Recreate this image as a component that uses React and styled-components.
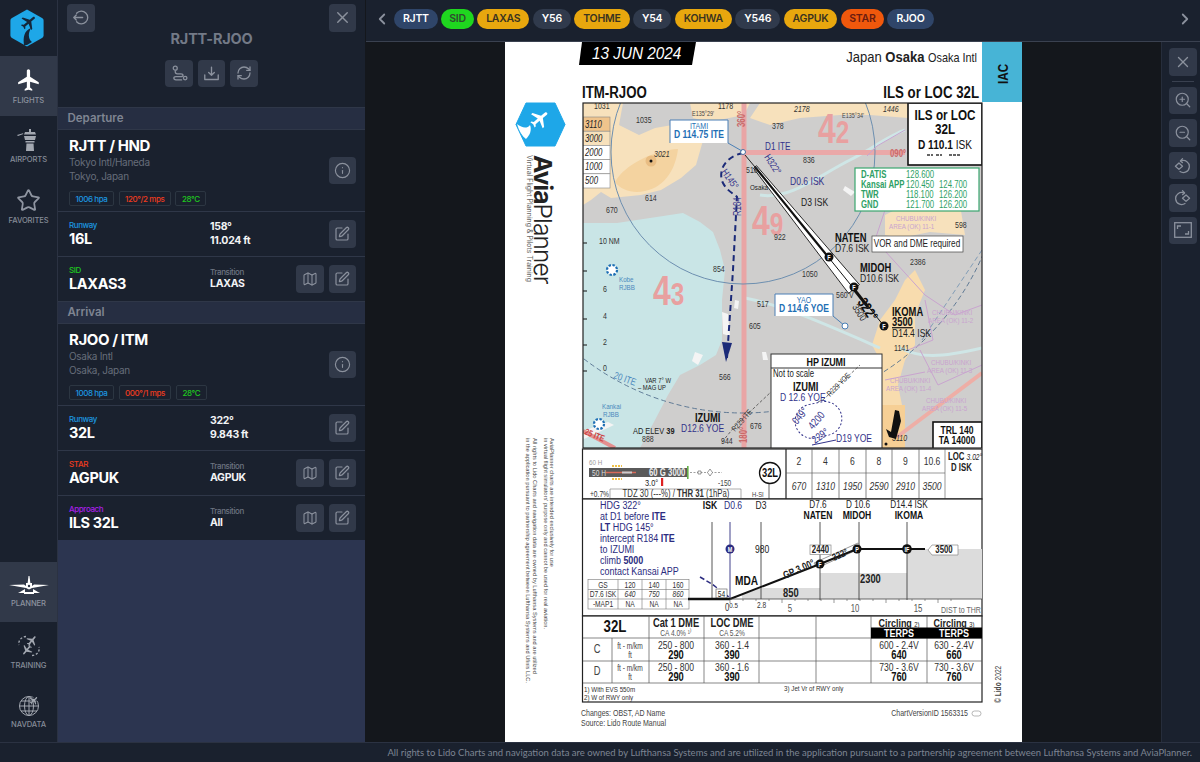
import React from "react";
import styled, { createGlobalStyle } from "styled-components";
import {
  X,
  Info,
  SquarePen,
  Map as MapIcon,
  RefreshCw,
  ChevronLeft,
  ChevronRight,
  ZoomIn,
  ZoomOut,
  Star,
} from "lucide-react";

const Global = createGlobalStyle`
  html, body, #root { margin: 0; height: 100%; }
  body {
    background: #14171c;
    font-family: Inter, "Open Sans", sans-serif;
    overflow: hidden;
  }
`;

const Page = styled.div`
  width: 1200px;
  height: 762px;
  display: flex;
  flex-direction: column;
`;

const Body = styled.div`
  flex: 1;
  display: flex;
  min-height: 0;
`;

const Footer = styled.div`
  height: 19px;
  border-top: 1px solid #2b3242;
  background: #1a212e;
  color: #7d8492;
  font-family: Lato, sans-serif;
  font-size: 9.5px;
  line-height: 20px;
  text-align: right;
  padding-right: 8px;
`;

const Rail = styled.nav`
  width: 58px;
  flex: none;
  background: #1a212e;
  display: flex;
  flex-direction: column;
  justify-content: space-between;
  border-right: 1px solid #2b3242;
  box-sizing: border-box;
`;

const LogoBox = styled.div`
  height: 56px;
  display: flex;
  align-items: center;
  justify-content: center;
  padding-right: 3px;
  box-sizing: border-box;
`;

const RailGroup = styled.div`
  display: flex;
  flex-direction: column;
`;

const RailItem = styled.a`
  height: 60px;
  display: flex;
  flex-direction: column;
  align-items: center;
  justify-content: center;
  gap: 3px;
  background: ${(p) => (p.$active ? "#313949" : "transparent")};
  color: ${(p) => (p.$active ? "#8d939f" : "#858b97")};
  font-size: 7.6px;
  font-weight: 500;
  letter-spacing: -0.1px;
`;

const Panel = styled.aside`
  width: 308px;
  flex: none;
  background: #2c3550;
  border-right: 1px solid #14171c;
  box-sizing: border-box;
`;

const Head = styled.div`
  height: 107px;
  background: #1a212e;
  padding: 4px 9px;
  box-sizing: border-box;
  position: relative;
`;

const HeadTop = styled.div`
  display: flex;
  justify-content: space-between;
`;

const Title = styled.div`
  color: #737a87;
  font-size: 14.5px;
  font-weight: 700;
  text-align: center;
  margin-top: -2px;
  letter-spacing: -0.2px;
`;

const HeadActions = styled.div`
  display: flex;
  justify-content: center;
  gap: 5px;
  margin-top: 13px;
`;

const Btn = styled.button`
  width: 27.5px;
  height: 27.5px;
  flex: none;
  padding: 0;
  border: 0;
  border-radius: 4px;
  background: #313949;
  color: #8b919d;
  display: flex;
  align-items: center;
  justify-content: center;
`;

const Band = styled.div`
  height: 21px;
  line-height: 21px;
  border-top: 1px solid #2f3748;
  background: #262e42;
  color: #7f8592;
  font-size: 11.5px;
  font-weight: 600;
  padding-left: 9.5px;
`;

const Row = styled.div`
  height: ${(p) => p.$h}px;
  box-sizing: border-box;
  background: #1a212e;
  border-top: 1px solid #2f3748;
  padding: 0 9px 0 11px;
  display: flex;
  align-items: center;
`;

const AirportInfo = styled.div`
  flex: 1;
  padding-top: 1px;
`;

const Code = styled.div`
  color: #fff;
  font-size: 15px;
  font-weight: 700;
  line-height: 20px;
  letter-spacing: -0.4px;
`;

const Place = styled.div`
  color: #666d7a;
  font-size: 10px;
  line-height: 13.7px;
  letter-spacing: -0.3px;
`;

const Badges = styled.div`
  display: flex;
  gap: 4.5px;
  margin-top: 8px;
`;

const Badge = styled.span`
  height: 15px;
  padding: 0 5.5px;
  line-height: 14px;
  box-sizing: border-box;
  border: 1px solid #2c3642;
  border-radius: 2px;
  font-size: 8px;
  font-weight: 500;
  letter-spacing: -0.4px;
  color: ${(p) => p.$c};
`;

const Col = styled.div`
  width: ${(p) => p.$w || "141px"};
  flex: none;
`;

const Small = styled.div`
  font-size: 8px;
  line-height: 10px;
  font-weight: 500;
  letter-spacing: -0.4px;
  color: ${(p) => p.$c || "#6d7481"};
`;

const Big = styled.div`
  color: #fff;
  font-size: 14.5px;
  font-weight: 700;
  line-height: 18px;
  letter-spacing: -0.35px;
`;

const Mid = styled.div`
  color: #f2f3f5;
  font-size: 10.5px;
  font-weight: 700;
  line-height: 14px;
  letter-spacing: -0.3px;
`;

const Actions = styled.div`
  margin-left: auto;
  display: flex;
  gap: 5px;
`;

const Main = styled.main`
  flex: 1;
  min-width: 0;
  display: flex;
  flex-direction: column;
`;

const TopBar = styled.div`
  height: 42px;
  flex: none;
  box-sizing: border-box;
  background: #1a212e;
  border-bottom: 1px solid #3a4150;
  display: flex;
  align-items: center;
  padding: 0 6px 4px 7px;
  color: #8b919d;
`;

const Chips = styled.div`
  display: flex;
  gap: 3.4px;
  margin-left: 3px;
  flex: 1;
`;

const Chip = styled.span`
  height: 20px;
  line-height: 20px;
  border-radius: 10px;
  padding: 0 ${(p) => p.$pad || 8.5}px;
  font-size: 10.5px;
  font-weight: 600;
  letter-spacing: -0.25px;
  text-align: center;
  background: ${(p) => p.$bg};
  color: ${(p) => p.$fg};
`;

const Content = styled.div`
  flex: 1;
  display: flex;
  min-height: 0;
`;

const Viewer = styled.div`
  flex: 1;
  display: flex;
  justify-content: center;
  background: #14171c;
  overflow: hidden;
`;

const Tools = styled.div`
  width: 39px;
  flex: none;
  box-sizing: border-box;
  background: #1a212e;
  border-left: 1px solid #262d3b;
  padding: 6px 0 0 7px;
  display: flex;
  flex-direction: column;
  gap: 5px;
`;

const ToolSep = styled.div`
  width: 22px;
  height: 1px;
  margin: 0 0 0 3px;
  background: #3a4150;
`;

const ChartSvg = styled.svg`
  display: block;
  width: 517px;
  height: 700px;
  flex: none;
  background: #fff;
  font-family: "Liberation Sans", sans-serif;
`;

// svg text in page coordinates, squeezed sideways like the chart's narrow face
const T = ({ x, y, s = 8, w, a, c = "#222", r, i, cx = 0.78, children }) => (
  <text
    fontSize={s}
    fontWeight={w ? 700 : 400}
    fontStyle={i ? "italic" : "normal"}
    textAnchor={a || "start"}
    fill={c}
    transform={`${r !== undefined ? `rotate(${r} ${x} ${y}) ` : ""}translate(${x} ${y}) scale(${cx} 1)`}
  >
    {children}
  </text>
);

const PLANE =
  "M21 16v-2l-8-5V3.500c0-.83-.67-1.500-1.500-1.500S10 2.670 10 3.500V9l-8 5v2l8-2.500V19l-2 1.500V22l3.500-1 3.500 1v-1.500L13 19v-5.500l8 2.500z";

const RailLogo = () => (
  <svg width="36" height="40" viewBox="0 0 36 40">
    <path
      d="M18 1.500 33 10c1 .6 1.600 1.500 1.600 2.700v14.600c0 1.200-.6 2.100-1.600 2.700L18 38.500 3 30c-1-.6-1.600-1.500-1.600-2.700V12.700C1.400 11.500 2 10.600 3 10z"
      fill="#1ea7e8"
    />
    <path d="M15 37c-1-8 0-14 7-17-3 5-3 11 1 14l-5 3z" fill="#14263a" />
    <g transform="translate(11 5) rotate(50 9 9) scale(.78)">
      <path d={PLANE} fill="#14263a" />
    </g>
  </svg>
);

const TowerIcon = () => (
  <svg width="26" height="24" viewBox="0 0 26 24" fill="#a3a8b1">
    <path d="M1 7l6-1.700.4.800L2 8z" />
    <rect x="13" y="1" width="2" height="3" />
    <path d="M9 4h10l1 2.500H8z" />
    <path d="M8 8h12l-1 4H9z" />
    <rect x="9.500" y="13" width="9" height="1.500" />
    <path d="M10.500 15.500h7l.5 7.500h-8z" />
  </svg>
);

const PlannerIcon = () => (
  <svg width="40" height="20" viewBox="0 0 40 20" fill="#fff">
    <path d="M19.500 0h1l1 8h-3z" />
    <path d="M0 9l15-.5 2 1.500v2zM40 9l-15-.5-2 1.500v2z" />
    <path d="M17 7h6v5l-3 1.500L17 12z" />
    <path d="M11 16l5-3v4H9zM29 16l-5-3v4h7z" />
    <path d="M15 16h10v2H15z" />
    <circle cx="20" cy="10" r="1.200" fill="#313949" />
  </svg>
);

const TrainingIcon = () => (
  <svg width="24" height="24" viewBox="0 0 24 24">
    <g transform="translate(9 0) rotate(40 6 6) scale(.55)">
      <path d={PLANE} fill="#a3a8b1" />
    </g>
    <g transform="translate(2 10) rotate(220 7 6) scale(.55)">
      <path d={PLANE} fill="#a3a8b1" />
    </g>
    <path
      d="M9 2.500C4 3 1 7 2 11M15 21.500c5-.5 8-4 7-8.500"
      fill="none"
      stroke="#a3a8b1"
      strokeWidth="1.300"
      strokeDasharray="2.200 1.800"
    />
  </svg>
);

const NavdataIcon = () => (
  <svg width="22" height="22" viewBox="0 0 22 22" fill="none" stroke="#a3a8b1" strokeWidth="1">
    <circle cx="11" cy="11" r="9.500" />
    <ellipse cx="11" cy="11" rx="4.500" ry="9.500" />
    <path d="M11 1.500v19M1.500 11h19M3 6h16M3 16h16" />
    <path d="M13 3l6 4-1-5z" fill="#1a212e" stroke="none" />
    <g transform="translate(11 0) rotate(45 5 5) scale(.45)">
      <path d={PLANE} fill="#a3a8b1" stroke="none" />
    </g>
  </svg>
);

const LeaveIcon = () => (
  <svg width="17" height="17" viewBox="0 0 24 24" fill="none" stroke="currentColor" strokeWidth="1.900" strokeLinecap="round" strokeLinejoin="round">
    <path d="M6.500 6a9 9 0 1 1 0 12" />
    <path d="M15 12H2.500M6 8.500 2.500 12 6 15.500" />
  </svg>
);

const RoutePinIcon = () => (
  <svg width="17" height="17" viewBox="0 0 24 24" fill="none" stroke="currentColor" strokeWidth="1.800" strokeLinecap="round">
    <circle cx="6" cy="4.500" r="2.800" />
    <path d="M6 8v1.500c0 2 1 3 3 3h5c2 0 3 1 3 2s-1 2-3 2H7c-2 0-3 1-3 2s1 2.500 3 2.500h8" />
    <circle cx="20" cy="18.500" r="2.500" />
  </svg>
);

const TrayIcon = () => (
  <svg width="17" height="17" viewBox="0 0 24 24" fill="none" stroke="currentColor" strokeWidth="1.900" strokeLinecap="round" strokeLinejoin="round">
    <path d="M12 3v11M8 10.500l4 4 4-4M2.500 14v6.500h19V14" />
  </svg>
);

const RotateIcon = ({ flip }) => (
  <svg width="17" height="17" viewBox="0 0 24 24" fill="none" stroke="currentColor" strokeWidth="1.800" strokeLinecap="round" strokeLinejoin="round">
    <g transform={flip ? "matrix(-1 0 0 1 24 0)" : undefined}>
      <path d="M12 2.500 9 5.500l3 2.500" />
      <path d="M10 5.500a8.500 8.500 0 1 1-1.500 15" />
      <path d="M7 8.500 2 13l5 4.500 5-4.500z" />
    </g>
  </svg>
);

const FitIcon = () => (
  <svg width="18" height="16" viewBox="0 0 18 16" fill="none" stroke="currentColor" strokeWidth="1.300">
    <rect x=".7" y=".7" width="16.600" height="14.600" />
    <path d="M3.500 7V4H7M14.500 9v3H11" />
  </svg>
);

const Compass = ({ x, y }) => (
  <circle cx={x} cy={y} r="5" fill="#fff" stroke="#1f6fb5" strokeWidth="2.200" strokeDasharray="2.400 1.500" />
);

const FixMark = ({ x, y, t = "F" }) => (
  <g>
    <circle cx={x} cy={y} r={t === "IF" ? 4.800 : 4.500} fill="#111" />
    <T x={x} y={y + 2.500} s={7} w a="middle" c="#fff">{t}</T>
  </g>
);

const MinRow = ({ y, name, a, b, c, d, e, f, g, h }) => (
  <g>
    <T x={597} y={y + 14} s={12} a="middle" c="#444">{name}</T>
    <T x={630} y={y + 10} s={8.500} a="middle" c="#444">ft - m/km</T>
    <T x={630} y={y + 19} s={8.500} a="middle" c="#444">ft</T>
    <T x={676} y={y + 10} s={11} a="middle" c="#333">{a}</T>
    <T x={676} y={y + 20} s={12} w a="middle" c="#111">{b}</T>
    <T x={732} y={y + 10} s={11} a="middle" c="#333">{c}</T>
    <T x={732} y={y + 20} s={12} w a="middle" c="#111">{d}</T>
    <T x={899} y={y + 10} s={11} a="middle" c="#333">{e}</T>
    <T x={899} y={y + 20} s={12} w a="middle" c="#111">{f}</T>
    <T x={954} y={y + 10} s={11} a="middle" c="#333">{g}</T>
    <T x={954} y={y + 20} s={12} w a="middle" c="#111">{h}</T>
  </g>
);

const spots = [
  [594, 109, "1031"], [718, 109, "1178"], [636, 123, "1035"], [654, 157, "3021"],
  [645, 201, "614"], [606, 213, "670"], [599, 244, "10 NM"], [772, 129, "378"],
  [794, 112, "2178"], [883, 112, "1446"], [803, 163, "836"], [774, 240, "922"],
  [802, 277, "1050"], [910, 265, "2386"], [955, 228, "598"], [713, 272, "854"],
  [746, 173, "518"], [836, 298, "560'V"], [757, 307, "517"], [749, 329, "605"],
  [719, 380, "566"], [894, 351, "1141"], [642, 442, "888"], [892, 441, "3110"],
  [721, 444, "944"], [750, 429, "676"],
];

const grads = [
  [2, 670], [4, 1310], [6, 1950], [8, 2590], [9, 2910], [10.6, 3500],
];
const gradX = [786, 812, 839, 866, 892, 919, 945];

const legend = ["3110", "3000", "2000", "1000", "500"];

const Chart = () => (
  <ChartSvg viewBox="505 42 517 700">
    {/* brand strip */}
    <path d="M526 103h29l10 21.500-10 21.500h-29l-10-21.500z" fill="#1ea7e8" stroke="#1ea7e8" strokeWidth="1" strokeLinejoin="round" />
    <path d="M517 124c5 4 10 5 13 1 2 5 0 10-4 14-4-3-7-8-9-15z" fill="#fff" />
    <g transform="translate(528 108) rotate(50 12 12) scale(.95)"><path d={PLANE} fill="#fff" /></g>
    <text x="534" y="155" fontSize="24.500" fill="#222" letterSpacing="-.9" fontFamily="Inter, sans-serif" transform="rotate(90 534 155)"><tspan fontWeight="700">Avia</tspan><tspan fontWeight="300">Planner</tspan></text>
    <text x="527" y="155" fontSize="7" fill="#666" transform="rotate(90 527 155)" fontFamily="Inter, sans-serif">Virtual Flight Planning &amp; Pilots Training</text>
    <g fontSize="5.700" fill="#444">
      <text x="550" y="438" transform="rotate(90 550 438)">AviaPlanner charts are intended exclusively for use</text>
      <text x="544" y="438" transform="rotate(90 544 438)">in virtual flight simulators' purpose only and cannot be used for real aviation.</text>
      <text x="533" y="438" transform="rotate(90 533 438)">All rights to Lido Charts and navigation data are owned by Lufthansa Systems and are utilized</text>
      <text x="526" y="438" transform="rotate(90 526 438)">in the application pursuant to partnership agreement between Lufthansa Systems and Ufinis LLC.</text>
    </g>

    {/* chart header */}
    <path d="M582 42h114l-4 23H579z" fill="#000" />
    <T x={592} y={59} s={17} i c="#fff" cx={0.9}>13 JUN 2024</T>
    <T x={977} y={62} s={15} a="end" cx={0.87}>Japan <tspan fontWeight="700">Osaka</tspan> <tspan fontSize="12.500">Osaka Intl</tspan></T>
    <T x={582} y={98} s={17} w c="#111">ITM-RJOO</T>
    <T x={979} y={98} s={17} w a="end" c="#111">ILS or LOC 32L</T>
    <rect x="982" y="42" width="41" height="60" fill="#47b4d6" />
    <T x={1008} y={84} s={15} w r={-90} c="#111">IAC</T>

    {/* map */}
    <clipPath id="mapClip"><rect x="583" y="103" width="399" height="345" /></clipPath>
    <g clipPath="url(#mapClip)">
      <rect x="583" y="103" width="399" height="345" fill="#cfcecd" />
      <path d="M583 103h40l-4 22 20 10 16-7 35-6 14 15-8 28-15 13-20 12-20 5-30 3-10-6-10 8-8 5z" fill="#f7e1bc" />
      <path d="M690 103h60l-6 12-35 7-16-4z" fill="#f7e1bc" />
      <path d="M615 182c10-18 40-32 63-33-2 18-12 38-33 42-12 3-24-1-30-9z" fill="#f4d3a0" />
      <circle cx="651" cy="161" r="5.500" fill="#e9bd83" />
      <circle cx="651" cy="161" r="1.500" fill="#111" />
      <path d="M583 223l34 0 33-5 33-5 17 9 13 10 7 18 5 20-3 30v40l-6 15-16 10-20 10-12 20-13 25-15 28h-57z" fill="#c9e5e6" />
      <path d="M760 103h148v15l-38-3-30 0-40 3-30 7-20-7z" fill="#f7e1bc" />
      <path d="M885 215l20-10h55l5 30-35-3-30 6-15-3z" fill="#f7e1bc" />
      <path d="M915 270l10 20-10 25v30l-10 15-7 25 7 35v28h-23v-48l-2-40-8-15 8-25 15-20 10-20z" fill="#f8dcae" />
      <path d="M880 405h25v43h-25z" fill="#f6cf95" />
      <g fill="none" stroke="#cfe6e6" strokeWidth="3">
        <path d="M745 298c40 8 80 26 135 50" />
        <path d="M760 195c30 5 60-20 90-35 20-10 40-25 55-30" />
        <path d="M900 348c20 10 40 10 82 0" />
      </g>
      <g fill="#f4f4f4">
        <path d="M722 312l6 2 2 22-7-2zM695 352l8 3-5 10-6-4zM580 432l28-10 6 3-30 14zM762 352l4 0 2 8-5 0zM735 300l4 1-1 8-4-1zM845 186l10 6-4 4-8-6z" />
      </g>
      {/* red numbers and bands */}
      <rect x="741.500" y="103" width="5" height="345" fill="#e9a5a5" />
      <rect x="745" y="150" width="160" height="5" fill="#eaa8a8" />
      <path d="M897 437l85-64" stroke="#eeaea6" strokeWidth="4" />
      <path d="M583 431l32 17" stroke="#e48f8f" strokeWidth="4" />
      <T x={818} y={143} s={42} w c="#e8a0a0" cx={0.76}>4<tspan fontSize="32">2</tspan></T>
      <T x={752} y={235} s={42} w c="#e8a0a0" cx={0.76}>4<tspan fontSize="32">9</tspan></T>
      <T x={653} y={305} s={42} w c="#e8a0a0" cx={0.76}>4<tspan fontSize="32">3</tspan></T>
      {/* range rings and airspace */}
      <circle cx="743" cy="152" r="132" fill="none" stroke="#6d8fb0" strokeWidth="1" />
      <circle cx="743" cy="152" r="261" fill="none" stroke="#54718e" strokeWidth=".9" strokeDasharray="5 3" />
      <g fill="none" stroke="#c9a4cf" strokeWidth="1">
        <path d="M905 130l-28 16-10 10M885 210l-10 30 50 55 30 20 27-10" />
        <path d="M925 300l8 40-25 10M920 350l18 35 44-20M885 380l40-8" />
      </g>
      <path d="M982 250l-60 90" stroke="#6d8fb0" strokeWidth=".8" strokeDasharray="5 3" fill="none" />
      {/* lateral path */}
      <path d="M743 153c-20 4-25 20-20 30 4 8 10 10 14 14l-4 73-6 88" fill="none" stroke="#1b2a78" strokeWidth="2" strokeDasharray="6 4" />
      <path d="M722 342l10 1-6 19z" fill="#1b2a78" />
      <path d="M756.500 165.700 753.500 168.300 848.600 293.400 859.400 284.600z" fill="#fff" stroke="#111" strokeWidth=".9" />
      <path d="M745 155l10 12" stroke="#222" strokeWidth="1" />
      <path d="M755 167l74 91" stroke="#111" strokeWidth="2.200" />
      <path d="M829 258l55 68" stroke="#111" strokeWidth="1" />
      <path d="M853 288l15 19" stroke="#111" strokeWidth="3" />
      <circle cx="743" cy="152" r="2.500" fill="#fff" stroke="#4a6fa0" />
      <FixMark x={829} y={257} />
      <FixMark x={854} y={287} />
      <FixMark x={884} y={326} />
      <Compass x={612} y={270} />
      <Compass x={599} y={424} />
      {/* text */}
      <g>
        {spots.map(([x, y, t]) => (
          <T key={t + x} x={x} y={y} s={9} i={t === "3021" || t === "2178" || t === "1446" || t === "3110"} c="#333">{t}</T>
        ))}
      </g>
      <T x={692} y={116} s={7} c="#444">E135°29'</T>
      <T x={842} y={118} s={7} c="#444">E135°34'</T>
      <T x={745} y={127} s={10} w r={-90} c="#c96a6a">360°</T>
      <T x={890} y={157} s={10} w c="#c96a6a">090°</T>
      <T x={747} y={443} s={10} w r={-90} c="#c96a6a">180°</T>
      <T x={750} y={190} s={8} c="#222">Osaka</T>
      <T x={765} y={150} s={10.500} c="#33338a">D1 ITE</T>
      <T x={764} y={157} s={10} r={57} c="#33338a">H322°</T>
      <T x={721} y={172} s={10} r={55} c="#33338a">H145°</T>
      <T x={741} y={216} s={10} r={-90} c="#33338a">R184</T>
      <T x={790} y={185} s={11} c="#33338a">D0.6 ISK</T>
      <T x={801} y={206} s={11} c="#222">D3 ISK</T>
      <T x={835} y={242} s={12} w c="#111">NATEN</T>
      <T x={835} y={252} s={11} c="#222">D7.6 ISK</T>
      <T x={860} y={272} s={12} w c="#111">MIDOH</T>
      <T x={860} y={282} s={11} c="#222">D10.6 ISK</T>
      <T x={857} y={302} s={15} w r={57} c="#111">322°</T>
      <T x={852} y={307} s={10} r={58} c="#222">3500</T>
      <T x={892} y={316} s={12} w c="#111">IKOMA</T>
      <T x={892} y={326} s={12} w c="#111"><tspan textDecoration="underline">3500</tspan></T>
      <T x={892} y={337} s={11} c="#222">D14.4 ISK</T>
      <T x={896} y={221} s={8} c="#c9a4cf">CHUBU/KINKI</T><T x={889} y={229} s={8} c="#c9a4cf">AREA (OK) 11-1</T>
      <T x={932} y={315} s={8} c="#c9a4cf">CHUBU/KINKI</T><T x={928} y={323} s={8} c="#c9a4cf">AREA (OK) 11-2</T>
      <T x={931} y={365} s={8} c="#c9a4cf">CHUBU/KINKI</T><T x={927} y={373} s={8} c="#c9a4cf">AREA (OK) 11-3</T>
      <T x={890} y={383} s={8} c="#c9a4cf">CHUBU/KINKI</T><T x={886} y={391} s={8} c="#c9a4cf">AREA (OK) 11-4</T>
      <T x={926} y={403} s={8} c="#c9a4cf">CHUBU/KINKI</T><T x={922} y={411} s={8} c="#c9a4cf">AREA (OK) 11-5</T>
      <T x={619} y={282} s={8} c="#4c89bd">Kobe</T><T x={619} y={290} s={8} c="#4c89bd">RJBB</T>
      <T x={602} y={409} s={8} c="#4c89bd">Kankai</T><T x={603} y={417} s={8} c="#4c89bd">RJBB</T>
      {[[292, "6"], [319, "4"], [345, "2"], [371, "0"]].map(([y, t]) => (
        <T key={t} x={603} y={y} s={9} c="#333">{t}</T>
      ))}
      <path d="M583 291h4M583 319h4M583 345h4M583 371h4M583 243h4M583 271h4" stroke="#111" />
      <T x={613} y={378} s={10} r={20} c="#4c89bd">20 ITE</T>
      <T x={645} y={383} s={7.500} c="#222">VAR 7° W</T>
      <T x={638} y={390} s={7.500} c="#222">– MAG UP</T>
      <T x={633} y={434} s={9.500} c="#222">AD ELEV <tspan fontWeight="700">39</tspan></T>
      <T x={584} y={434} s={9} w r={22} c="#c44">25 ITE</T>
      <T x={695} y={422} s={12} w c="#111">IZUMI</T>
      <T x={681} y={432} s={11} c="#33338a">D12.6 YOE</T>
      <T x={735} y={432} s={8} r={-48} c="#333">R229 ITE</T>
      <path d="M722 442l14-17 36-34" stroke="#333" strokeWidth=".7" strokeDasharray="3 2" fill="none" />
      {/* boxes on the map */}
      <g>
        {legend.map((t, k) => (
          <g key={t}>
            <rect x="583" y={117 + k * 14.200} width="27" height="14.200" fill={k === 0 ? "#f0c48c" : k === 1 ? "#f7e1bc" : "#fff"} stroke="#888" strokeWidth=".6" />
            <T x={585} y={127.500 + k * 14.200} s={10} i c="#222">{t}</T>
          </g>
        ))}
      </g>
      <path d="M670 143v-23h58v23" fill="#fff" stroke="#4a7fb5" />
      <T x={699} y={129} s={9} a="middle" c="#1f6fb5">ITAMI</T>
      <T x={699} y={138} s={11} w a="middle" c="#1f6fb5">D 114.75 ITE</T>
      <path d="M728 143l14 8" stroke="#4a7fb5" fill="none" />
      <path d="M775 316v-22h58v22" fill="#fff" stroke="#4a7fb5" />
      <T x={804} y={303} s={9} a="middle" c="#1f6fb5">YAO</T>
      <T x={804} y={312} s={11} w a="middle" c="#1f6fb5">D 114.6 YOE</T>
      <path d="M833 316l12 10" stroke="#4a7fb5" fill="none" />
      <circle cx="845" cy="326" r="3" fill="#fff" stroke="#4a7fb5" />
      <rect x="908" y="103" width="74" height="62" fill="#fff" stroke="#111" strokeWidth="1.600" />
      <T x={945} y={120} s={15} w a="middle" c="#111">ILS or LOC</T>
      <T x={945} y={134} s={15} w a="middle" c="#111">32L</T>
      <T x={945} y={149} s={13} a="middle" c="#111"><tspan fontWeight="700">D 110.1</tspan> ISK</T>
      <path d="M927 155h6M936 155h6M949 155h12" stroke="#333" strokeWidth="1.500" strokeDasharray="3 1" />
      <rect x="855" y="168" width="124" height="43" fill="#fff" stroke="#3aa66f" strokeWidth="1.200" />
      {[
        [178, "D-ATIS", "128.600", ""],
        [188, "Kansai APP", "120.450", "124.700"],
        [198, "TWR", "118.100", "126.200"],
        [208, "GND", "121.700", "126.200"],
      ].map(([y, n, f1, f2]) => (
        <g key={n}>
          <T x={861} y={y} s={10} w c="#2f9f66">{n}</T>
          <T x={906} y={y} s={10} c="#2f9f66">{f1}</T>
          <T x={939} y={y} s={10} c="#2f9f66">{f2}</T>
        </g>
      ))}
      <rect x="872" y="236" width="91" height="16" fill="#fff" stroke="#444" strokeWidth=".7" />
      <T x={917} y={247} s={10.500} a="middle" c="#222">VOR and DME required</T>
      {/* hp inset */}
      <rect x="771" y="354" width="111" height="95" fill="#fff" stroke="#333" />
      <path d="M771 368h111" stroke="#333" />
      <T x={826} y={366} s={11.500} w a="middle" c="#111">HP IZUMI</T>
      <T x={773} y={377} s={10} c="#222">Not to scale</T>
      <T x={793} y={391} s={12} w c="#111">IZUMI</T>
      <T x={780} y={401} s={11} c="#33338a">D 12.6 YOE</T>
      <path d="M818 402l6-3 36-34" stroke="#333" strokeWidth=".7" strokeDasharray="3 2" fill="none" />
      <T x={830} y={397} s={8} r={-45} c="#333">R229 YOE</T>
      <rect x="795" y="403" width="47" height="34" rx="17" fill="none" stroke="#33338a" strokeDasharray="2 2" transform="rotate(-12 818 420)" />
      <T x={797} y={425} s={11} r={-50} c="#33338a">049°</T>
      <T x={813} y={430} s={11} r={-50} c="#33338a">4200</T>
      <T x={815} y={444} s={11} r={-35} c="#33338a">229°</T>
      <T x={836} y={442} s={11} c="#33338a">D19 YOE</T>
      <path d="M812 445l24-5" stroke="#33338a" />
      <path d="M895 410l-4 22-5-3 3 8 7 2 5-18-2-10z" fill="#111" />
      <circle cx="886" cy="444" r="1.500" fill="#111" />
      <rect x="933" y="422" width="49" height="27" fill="#fff" stroke="#111" strokeWidth="1.600" />
      <T x={957} y={434} s={11} w a="middle" c="#111">TRL 140</T>
      <T x={957} y={444} s={11} w a="middle" c="#111">TA 14000</T>
    </g>
    <rect x="583" y="103" width="399" height="345" fill="none" stroke="#222" strokeWidth="1.200" />

    {/* approach strip */}
    <rect x="582.500" y="449" width="399.500" height="50" fill="#fff" stroke="#222" strokeWidth="1.200" />
    <path d="M786 449v50" stroke="#222" strokeWidth="1.200" />
    <T x={589} y={465} s={8} c="#999">60 H</T>
    <rect x="589" y="468" width="98" height="9" fill="#5a5a5a" />
    <T x={592} y={475.500} s={8.500} c="#ddd">50 H</T>
    <path d="M606 472.500h30" stroke="#d86a5a" strokeWidth="1.500" />
    <path d="M622 472.500h10" stroke="#ccc" strokeWidth="2" />
    <path d="M612 466h10M612 479h10" stroke="#f0c24a" strokeWidth="2" strokeDasharray="2 1" />
    <T x={649} y={476} s={10} w c="#eee">60 G 3000</T>
    <rect x="687" y="466" width="1.600" height="13" fill="#65b04a" />
    <path d="M690 472.500h32" stroke="#777" strokeWidth=".7" strokeDasharray="2 1.500" />
    <path d="M710 469l2.500 3.500-2.500 3.500-2.500-3.500zM698 471h3v3h-3z" fill="#fff" stroke="#555" strokeWidth=".6" />
    <T x={645} y={486} s={9.500} c="#222">3.0°</T>
    <rect x="661" y="478" width="2.200" height="8" fill="#d22" />
    <T x={718} y={486} s={8.500} c="#444">-150</T>
    <T x={590} y={497} s={8.500} c="#333">+0.7%</T>
    <path d="M610 499v-10h131v10" fill="none" stroke="#777" strokeWidth=".6" />
    <T x={676} y={497} s={10} a="middle" c="#333">TDZ 30 (---%) / <tspan fontWeight="700">THR 31</tspan> (1hPa)</T>
    <T x={752} y={497} s={7.500} c="#444">H-SI</T>
    <path d="M769 484v15" stroke="#222" strokeWidth=".7" />
    <circle cx="770" cy="473" r="10.500" fill="#fff" stroke="#111" strokeWidth="1.300" />
    <T x={770} y={477} s={12} w a="middle" c="#111">32L</T>
    <path d="M786 473h159M945 449v50" stroke="#555" strokeWidth=".6" />
    {gradX.slice(1, 6).map((x) => (
      <path key={x} d={`M${x} 449v50`} stroke="#555" strokeWidth=".7" />
    ))}
    {grads.map(([d, f], k) => (
      <g key={d}>
        <T x={(gradX[k] + gradX[k + 1]) / 2} y={465} s={11} a="middle" c="#333">{d}</T>
        <T x={(gradX[k] + gradX[k + 1]) / 2} y={490} s={11} i a="middle" c="#333">{f}</T>
      </g>
    ))}
    <T x={948} y={460} s={10} w c="#222">LOC <tspan fontWeight="400" fontStyle="italic" fontSize="8.500">3.02°</tspan></T>
    <T x={951} y={471} s={10} w c="#222">D ISK</T>

    {/* profile */}
    <rect x="582.500" y="499" width="399.500" height="117" fill="#fff" stroke="#222" strokeWidth="1.200" />
    {[
      [509, "HDG 322°"],
      [519.500, <>at D1 before <tspan fontWeight="700">ITE</tspan></>],
      [530.500, <><tspan fontWeight="700">LT</tspan> HDG 145°</>],
      [541.500, <>intercept R184 <tspan fontWeight="700">ITE</tspan></>],
      [552.500, "to IZUMI"],
      [563.500, <>climb <tspan fontWeight="700">5000</tspan></>],
      [575, "contact Kansai APP"],
    ].map(([y, t]) => (
      <T key={y} x={600} y={y} s={11.500} c="#2c2c80">{t}</T>
    ))}
    <g stroke="#777" strokeWidth=".6" fill="none">
      <rect x="588" y="579.500" width="101" height="29.500" />
      <path d="M588 589.500h101M588 599h101M618 579.500v29.500M642 579.500v29.500M666 579.500v29.500" />
    </g>
    {[
      [587.500, "GS", "120", "140", "160", false],
      [597, "D7.6 ISK", "640", "750", "860", true],
      [607, "-MAP1", "NA", "NA", "NA", false],
    ].map(([y, n, p, q, o, it]) => (
      <g key={n}>
        <T x={603} y={y} s={8.500} a="middle" c="#333">{n}</T>
        <T x={630} y={y} s={8.500} i={it} a="middle" c="#333">{p}</T>
        <T x={654} y={y} s={8.500} i={it} a="middle" c="#333">{q}</T>
        <T x={678} y={y} s={8.500} i={it} a="middle" c="#333">{o}</T>
      </g>
    ))}
    <path d="M742 599V595L760 588H820V573H907V549H982V599z" fill="#dcdcdc" />
    <path d="M712 522v78M761 522v77M820 522v78M859 522v78M907 522v78" stroke="#444" strokeWidth=".9" />
    <path d="M730 522v78" stroke="#2c2c80" strokeWidth=".9" />
    <T x={710} y={509} s={11} w a="middle" c="#111">ISK</T>
    <T x={733} y={509} s={11} a="middle" c="#2c2c80">D0.6</T>
    <T x={761} y={509} s={11} a="middle" c="#222">D3</T>
    <T x={818} y={508} s={10.500} a="middle" c="#222">D7.6</T>
    <T x={818} y={519} s={11} w a="middle" c="#111">NATEN</T>
    <T x={858} y={508} s={10.500} a="middle" c="#222">D 10.6</T>
    <T x={857} y={519} s={11} w a="middle" c="#111">MIDOH</T>
    <T x={909} y={508} s={10.500} a="middle" c="#222">D14.4 ISK</T>
    <T x={909} y={519} s={11} w a="middle" c="#111">IKOMA</T>
    <circle cx="730" cy="549" r="4.500" fill="#2c2c80" />
    <T x={730} y={552} s={7} w a="middle" c="#fff">M</T>
    <T x={755} y={553} s={11} c="#222">980</T>
    <path d="M700 577l12 7 18 14" stroke="#2c2c80" strokeWidth="1.500" strokeDasharray="5 2.500" fill="none" />
    <rect x="716" y="589" width="11" height="9" fill="#fff" stroke="#555" strokeWidth=".6" />
    <T x={721.500} y={597} s={8.500} a="middle" c="#222">54</T>
    <T x={735} y={585} s={13} w c="#111">MDA</T>
    <path d="M688 599h42" stroke="#111" strokeWidth="2.400" />
    <path d="M814 563l44-20 3 5-44 20z" fill="#fff" stroke="#555" strokeWidth=".6" />
    <path d="M730 599l90-35 37-15" stroke="#111" strokeWidth="2" />
    <path d="M857 549h68" stroke="#111" strokeWidth="1.800" />
    <FixMark x={820} y={564} />
    <FixMark x={857} y={549} t="P" />
    <FixMark x={907} y={549} t="IF" />
    <rect x="810" y="545" width="21" height="9.500" fill="#fff" stroke="#888" strokeWidth=".7" />
    <T x={820.500} y={553} s={10} w a="middle" c="#222">2440</T>
    <path d="M932 545h26v10h-26l-4-5z" fill="#fff" stroke="#888" strokeWidth=".7" />
    <T x={944} y={553} s={10} w a="middle" c="#222">3500</T>
    <T x={785} y={579} s={10.500} w r={-24} c="#222">GP 3.00°</T>
    <T x={834} y={561} s={10} w r={-24} c="#222">322°</T>
    <T x={783} y={597} s={12} w c="#222">850</T>
    <T x={860} y={583} s={12} w c="#222">2300</T>
    <path d="M730 599h252" stroke="#444" strokeWidth=".8" />
    {Array.from({ length: 18 }, (_, k) => (
      <path key={k} d={`M${730 + k * 13} 599v${k % 4 === 0 ? 4 : 2}`} stroke="#555" strokeWidth=".6" />
    ))}
    <T x={725} y={611} s={10} c="#333">0<tspan fontSize="8" dy="-3">0.5</tspan></T>
    <T x={757} y={608} s={8.500} c="#333">2.8</T>
    <T x={790} y={612} s={10} a="middle" c="#555">5</T>
    <T x={855} y={612} s={10} a="middle" c="#555">10</T>
    <T x={918} y={612} s={10} a="middle" c="#555">15</T>
    <T x={941} y={613} s={9} c="#666">DIST to THR</T>

    {/* minimums */}
    <rect x="582.500" y="616" width="399.500" height="86" fill="#fff" stroke="#222" strokeWidth="1.200" />
    <path d="M583 638h399M583 661h399M583 683h399" stroke="#555" strokeWidth=".7" />
    <path d="M612 638v45M649 616v67M704 616v67M759 616v67M816 616v67M871 616v67M927 616v67" stroke="#555" strokeWidth=".7" />
    <T x={615} y={632} s={17} w a="middle" c="#111">32L</T>
    <T x={676} y={627} s={12} w a="middle" c="#222">Cat 1 DME</T>
    <T x={676} y={636} s={8.500} a="middle" c="#555">CA 4.0% ¹⁾</T>
    <T x={732} y={627} s={12} w a="middle" c="#222">LOC DME</T>
    <T x={732} y={636} s={8.500} a="middle" c="#555">CA 5.2%</T>
    <rect x="871" y="627.500" width="111" height="11" fill="#000" />
    <T x={899} y={627} s={11.500} w a="middle" c="#222">Circling <tspan fontWeight="400" fontSize="7.500">2)</tspan></T>
    <T x={954} y={627} s={11.500} w a="middle" c="#222">Circling <tspan fontWeight="400" fontSize="7.500">3)</tspan></T>
    <T x={899} y={637} s={11.500} w a="middle" c="#fff">TERPS</T>
    <T x={954} y={637} s={11.500} w a="middle" c="#fff">TERPS</T>
    <MinRow y={638.500} name="C" a="250 - 800" b="290" c="360 - 1.4" d="390" e="600 - 2.4V" f="640" g="630 - 2.4V" h="660" />
    <MinRow y={661} name="D" a="250 - 800" b="290" c="360 - 1.6" d="390" e="730 - 3.6V" f="760" g="730 - 3.6V" h="760" />
    <T x={584} y={692} s={8} c="#333">1) With EVS 550m</T>
    <T x={584} y={700} s={8} c="#333">2) W of RWY only</T>
    <T x={784} y={691} s={8} c="#333">3) Jet Vr of RWY only</T>
    <T x={581} y={716} s={9} c="#444">Changes: OBST, AD Name</T>
    <T x={581} y={726} s={9} c="#444">Source: Lido Route Manual</T>
    <T x={968} y={716} s={9} a="end" c="#444">ChartVersionID 1563315</T>
    <rect x="972" y="711" width="9" height="5" rx="2.500" fill="none" stroke="#888" strokeWidth=".6" />
    <T x={1001} y={703} s={8.500} w r={-90} c="#444">© Lido <tspan fontWeight="400">2022</tspan></T>
  </ChartSvg>
);

const route = [
  ["RJTT", "#2f4569", "#fff", 9],
  ["SID", "#1fd61f", "#2f4c2f", 8],
  ["LAXAS", "#e8a70e", "#3a3320", 9],
  ["Y56", "#303a4c", "#fff", 9],
  ["TOHME", "#e8a70e", "#3a3320", 9],
  ["Y54", "#303a4c", "#fff", 9],
  ["KOHWA", "#e8a70e", "#3a3320", 9],
  ["Y546", "#303a4c", "#fff", 9],
  ["AGPUK", "#e8a70e", "#3a3320", 9],
  ["STAR", "#f0580c", "#6a1c10", 8.500],
  ["RJOO", "#2f4569", "#fff", 9],
];

const Wx = ({ items }) => (
  <Badges>
    <Badge $c="#1c97e0">{items[0]}</Badge>
    <Badge $c="#ef3c1e">{items[1]}</Badge>
    <Badge $c="#1fc81f">{items[2]}</Badge>
  </Badges>
);

const Airport = ({ code, name, city, wx }) => (
  <Row $h={82}>
    <AirportInfo>
      <Code>{code}</Code>
      <Place>{name}</Place>
      <Place>{city}</Place>
      <Wx items={wx} />
    </AirportInfo>
    <Btn>
      <Info size={17} strokeWidth={1.6} />
    </Btn>
  </Row>
);

const Runway = ({ id, hdg, len }) => (
  <Row $h={45}>
    <Col>
      <Small $c="#1c97e0">Runway</Small>
      <Big>{id}</Big>
    </Col>
    <Col $w="100px">
      <Mid>{hdg}</Mid>
      <Mid>{len}</Mid>
    </Col>
    <Actions>
      <Btn>
        <SquarePen size={16} strokeWidth={1.8} />
      </Btn>
    </Actions>
  </Row>
);

const Proc = ({ kind, color, name, transition }) => (
  <Row $h={45}>
    <Col>
      <Small $c={color}>{kind}</Small>
      <Big>{name}</Big>
    </Col>
    <Col $w="80px">
      <Small>Transition</Small>
      <Mid>{transition}</Mid>
    </Col>
    <Actions>
      <Btn>
        <MapIcon size={16} strokeWidth={1.6} />
      </Btn>
      <Btn>
        <SquarePen size={16} strokeWidth={1.8} />
      </Btn>
    </Actions>
  </Row>
);

export default function App() {
  return (
    <Page>
      <Global />
      <Body>
        <Rail>
          <RailGroup>
            <LogoBox>
              <RailLogo />
            </LogoBox>
            <RailItem $active>
              <svg width="26" height="26" viewBox="0 0 24 24">
                <path d={PLANE} fill="#fff" />
              </svg>
              FLIGHTS
            </RailItem>
            <RailItem>
              <TowerIcon />
              AIRPORTS
            </RailItem>
            <RailItem>
              <Star size={25} strokeWidth={1.7} color="#8f95a1" />
              FAVORITES
            </RailItem>
          </RailGroup>
          <RailGroup>
            <RailItem $active>
              <PlannerIcon />
              PLANNER
            </RailItem>
            <RailItem>
              <TrainingIcon />
              TRAINING
            </RailItem>
            <RailItem>
              <NavdataIcon />
              NAVDATA
            </RailItem>
          </RailGroup>
        </Rail>

        <Panel>
          <Head>
            <HeadTop>
              <Btn>
                <LeaveIcon />
              </Btn>
              <Btn>
                <X size={19} strokeWidth={1.8} />
              </Btn>
            </HeadTop>
            <Title>RJTT-RJOO</Title>
            <HeadActions>
              <Btn>
                <RoutePinIcon />
              </Btn>
              <Btn>
                <TrayIcon />
              </Btn>
              <Btn>
                <RefreshCw size={16} strokeWidth={1.9} />
              </Btn>
            </HeadActions>
          </Head>
          <Band>Departure</Band>
          <Airport
            code="RJTT / HND"
            name="Tokyo Intl/Haneda"
            city="Tokyo, Japan"
            wx={["1006 hpa", "120°/2 mps", "28°C"]}
          />
          <Runway id="16L" hdg="158°" len="11.024 ft" />
          <Proc kind="SID" color="#1fc81f" name="LAXAS3" transition="LAXAS" />
          <Band>Arrival</Band>
          <Airport
            code="RJOO / ITM"
            name="Osaka Intl"
            city="Osaka, Japan"
            wx={["1008 hpa", "000°/1 mps", "28°C"]}
          />
          <Runway id="32L" hdg="322°" len="9.843 ft" />
          <Proc kind="STAR" color="#ef3c1e" name="AGPUK" transition="AGPUK" />
          <Proc kind="Approach" color="#a81fe8" name="ILS 32L" transition="All" />
        </Panel>

        <Main>
          <TopBar>
            <ChevronLeft size={18} strokeWidth={2.4} />
            <Chips>
              {route.map(([label, bg, fg, pad], k) => (
                <Chip key={label + k} $bg={bg} $fg={fg} $pad={pad}>
                  {label}
                </Chip>
              ))}
            </Chips>
            <ChevronRight size={18} strokeWidth={2.4} />
          </TopBar>
          <Content>
            <Viewer>
              <Chart />
            </Viewer>
            <Tools>
              <Btn>
                <X size={18} strokeWidth={1.8} />
              </Btn>
              <ToolSep />
              <Btn>
                <ZoomIn size={18} strokeWidth={1.6} />
              </Btn>
              <Btn>
                <ZoomOut size={18} strokeWidth={1.6} />
              </Btn>
              <Btn>
                <RotateIcon />
              </Btn>
              <Btn>
                <RotateIcon flip />
              </Btn>
              <Btn>
                <FitIcon />
              </Btn>
            </Tools>
          </Content>
        </Main>
      </Body>
      <Footer>
        All rights to Lido Charts and navigation data are owned by Lufthansa Systems and are utilized in the application pursuant to a partnership agreement between Lufthansa Systems and AviaPlanner.
      </Footer>
    </Page>
  );
}
